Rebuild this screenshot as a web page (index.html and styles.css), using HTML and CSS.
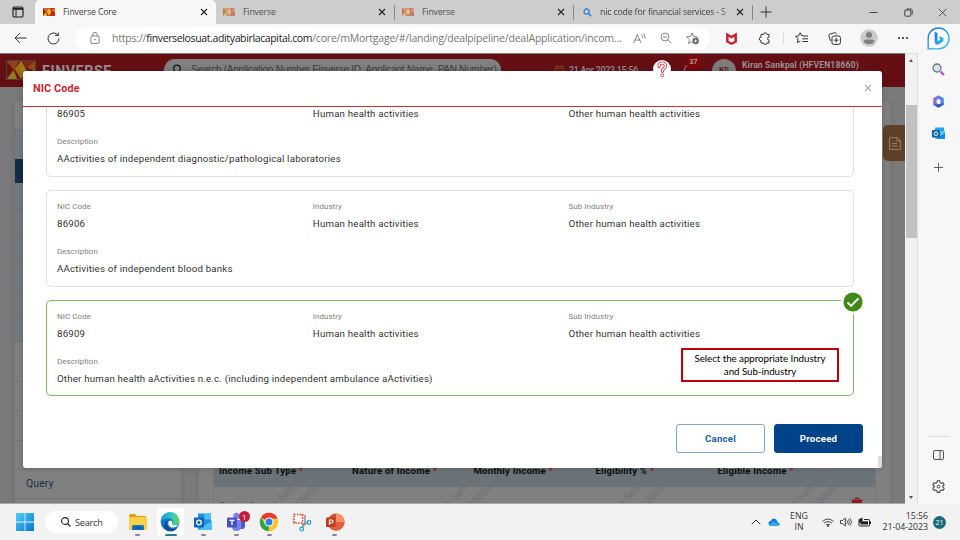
FILE: index.html
```html
<!DOCTYPE html>
<html lang="en">
<head>
<meta charset="utf-8">
<title>Finverse Core</title>
<link rel="stylesheet" href="styles.css">
</head>
<body>
<svg width="0" height="0" class="defs">
  <defs>
    <symbol id="logo" viewBox="0 0 30 20" preserveAspectRatio="none"><rect width="30" height="20" fill="#a61c12"/><path d="M0 0h13L7 10z" fill="#e0662a"/><path d="M13 0h17l-8 10z" fill="#c63a1c"/><path d="M8 9l7-9 6 11-6 9z" fill="#f2a51f"/><path d="M15 0l6 11h-7z" fill="#e7c43a"/><path d="M22 8l8 12H16z" fill="#cf2819"/><path d="M0 20l7-10 4 10z" fill="#e4bd2a"/><path d="M22 7l8-7v12z" fill="#e07a21"/></symbol>
    <symbol id="x" viewBox="0 0 8 8"><path d="M1 1l6 6M7 1L1 7" fill="none" stroke="currentColor" stroke-width="1.1"/></symbol>
  </defs>
</svg>

<header class="tabs">
  <svg class="tabmenu" viewBox="0 0 12 12"><rect x="1" y="1" width="10" height="10" rx="1.6" fill="none" stroke="#222" stroke-width="1.2"/><path d="M1 2.8h10" stroke="#222" stroke-width="2"/><path d="M4 3v8" stroke="#222"/></svg>
  <div class="tab active"><svg class="fav"><use href="#logo"/></svg><span>Finverse Core</span><svg class="close"><use href="#x"/></svg></div>
  <div class="tab dim"><svg class="fav"><use href="#logo"/></svg><span>Finverse</span><svg class="close"><use href="#x"/></svg></div>
  <div class="tab dim"><svg class="fav"><use href="#logo"/></svg><span>Finverse</span><svg class="close"><use href="#x"/></svg></div>
  <div class="tab nic"><svg class="mag" viewBox="0 0 9 9"><circle cx="3.6" cy="3.6" r="2.6" fill="none" stroke="#2583d8" stroke-width="1.3"/><path d="M5.5 5.5l2.7 2.7" stroke="#2583d8" stroke-width="1.5"/></svg><span>nic code for financial services - S</span><svg class="close"><use href="#x"/></svg></div>
  <svg class="newtab" viewBox="0 0 12 12"><path d="M6 .5v11M.5 6h11" stroke="#333" fill="none"/></svg>
  <div class="winctl">
    <svg viewBox="0 0 9 9"><path d="M.5 4.5h8" stroke="#333" stroke-width=".9"/></svg>
    <svg viewBox="0 0 9 9"><rect x=".8" y="2" width="6" height="6.2" rx="1" fill="none" stroke="#333" stroke-width=".9"/><path d="M2.5 1h4.2q1.5 0 1.5 1.5v4" fill="none" stroke="#333" stroke-width=".9"/></svg>
    <svg viewBox="0 0 9 9"><path d="M.8.8l7.6 7.6M8.4.8L.8 8.4" stroke="#333" stroke-width=".8"/></svg>
  </div>
</header>

<div class="browser">
  <div class="left">
    <div class="toolbar">
      <svg class="back" viewBox="0 0 13 12"><path d="M12.5 6H1M6 1L1 6l5 5" fill="none" stroke="#333"/></svg>
      <svg class="reload" viewBox="0 0 13 13"><path d="M12 6.5A5.5 5.5 0 1 1 9.8 2.1L11 3.2M11.3.5v3H8.2" fill="none" stroke="#333"/></svg>
      <div class="url">
        <svg class="lock" viewBox="0 0 10 12"><rect x=".8" y="4" width="8.4" height="7.4" rx="1.2" fill="none" stroke="#777" stroke-width=".9"/><path d="M2.8 4V2.6a2.2 2.2 0 0 1 4.4 0V4" fill="none" stroke="#777" stroke-width=".9"/><circle cx="5" cy="7.6" r=".8" fill="#777"/></svg>
        <span class="addr">https://<b>finverselosuat.adityabirlacapital.com</b>/core/mMortgage/#/landing/dealpipeline/dealApplication/incom...</span>
        <svg class="read" viewBox="0 0 13 11"><path d="M.6 10L4.300 1.500 8 10M2 7h4.700M8.300 1.500q1.600 1.500 1.200 3.500M10.500.6q2 2.200 1.500 5" fill="none" stroke="#777" stroke-width=".9"/></svg>
        <svg class="zo" viewBox="0 0 12 12"><circle cx="5" cy="5" r="3.9" fill="none" stroke="#777" stroke-width=".9"/><path d="M3 5h4M7.8 7.8l3.4 3.4" stroke="#777" stroke-width=".9"/></svg>
        <svg class="fv" viewBox="0 0 14 13"><path d="M6 1l1.5 3.5 4 .4-2.6 2.6M6 1L4.5 4.5l-4 .4 3 2.8-.9 3.9L5.8 9.7" fill="none" stroke="#777" stroke-width=".9"/><circle cx="9.6" cy="9" r="3.3" fill="#666"/><path d="M9.6 7.3v3.4M7.9 9h3.4" stroke="#fff" stroke-width=".8"/></svg>
      </div>
      <svg class="mc" viewBox="0 0 10 12"><path d="M0 .5l5 3 5-3v9L5 12 0 9.500zM2.300 4.300v3.900L5 9.600l2.700-1.400V4.300L5 6z" fill="#c8202f" fill-rule="evenodd"/></svg>
      <svg class="pz" viewBox="0 0 13 13"><path d="M3 2.4h2.6a1.6 1.6 0 0 1 3.2 0H11v2.7a1.5 1.5 0 0 0 0 3V11H8.7a1.5 1.5 0 0 1-3 0H3V8.6a1.7 1.7 0 0 1 0-3.4z" fill="none" stroke="#333" stroke-width="1" stroke-linejoin="round"/></svg>
      <i class="sep"></i>
      <svg class="favs" viewBox="0 0 14 12"><path d="M8 3.7L6.6 3.5 5.2.7 3.7 3.8l-3.2.5L3 6.8l-.6 3.8 2.9-1.6M8 4h5M7.3 6.8H13M7.3 9.5H13" fill="none" stroke="#333" stroke-linejoin="round"/></svg>
      <svg class="coll" viewBox="0 0 13 13"><rect x="4" y="4" width="8.4" height="8.4" rx="1.7" fill="none" stroke="#333"/><path d="M8.2 6v4.4M6 8.2h4.4M2.6 9L.8 3.7Q.5 2.6 1.6 2.2L6.600.7q1.100-.3 1.500.8l.3.9" fill="none" stroke="#333"/></svg>
      <svg class="ava" viewBox="0 0 18 18"><circle cx="9" cy="9" r="8.7" fill="#cdcac8"/><circle cx="9" cy="6" r="3" fill="#82807e"/><path d="M3.800 13q0-2.600 2.600-2.600h5.200q2.600 0 2.600 2.600-2 2.300-5.200 2.300T3.800 13" fill="#82807e"/></svg>
      <svg class="dots" viewBox="0 0 12 4"><circle cx="2" cy="2" r="1" fill="#222"/><circle cx="6" cy="2" r="1" fill="#222"/><circle cx="10" cy="2" r="1" fill="#222"/></svg>
    </div>

    <div class="view">
      <div class="page">
        <div class="apphead">
          <svg class="applogo"><use href="#logo"/></svg>
          <span class="brand">FINVERSE</span>
          <div class="appsearch"><svg viewBox="0 0 10 10"><circle cx="4.500" cy="4" r="3" fill="none" stroke="#111" stroke-width="1.100"/><path d="M6.500 6.500l3 3" stroke="#111"/></svg><span>Search (Application Number Finverse ID, Applicant Name, PAN Number)</span></div>
          <svg class="cal" viewBox="0 0 9 9"><path d="M.8 1.500h7.400v7H.8zM.8 3.500h7.400M2.500 0v2M6.500 0v2" fill="none" stroke="#84421f"/></svg>
          <span class="date">21 Apr 2023 15:56</span>
          <div class="bell"><svg viewBox="0 0 12 12"><path d="M2.500 12V6a3.800 3.800 0 0 1 4-3.500" fill="none" stroke="#9a8080"/></svg><span>37</span></div>
          <span class="ks">KS</span>
          <span class="user">Kiran Sankpal (HFVEN18660)</span>
        </div>
        <div class="content">
          <nav class="side">
            <div class="r r1"></div><div class="r r2"></div><div class="r on"></div><div class="r b1"></div><div class="r b1"></div><div class="r b1"></div><div class="r b2"></div><div class="r b1"></div><div class="r b1"></div><div class="r g1"></div><div class="r g2"></div><div class="r g2"></div><div class="r g2"></div><div class="r q">Query</div><div class="r last"></div>
          </nav>
          <section class="panel">
            <div class="grid">
              <div class="th"><span>Income Sub Type <em>*</em></span><span>Nature of Income <em>*</em></span><span>Monthly Income <em>*</em></span><span>Eligibility % <em>*</em></span><span>Eligible Income <em>*</em></span></div>
              <div class="td"><span>Rental - Own</span><svg viewBox="0 0 12 9"><path d="M.5 2.500h11L10 9H2zM3.500 2l1-1.500h3l1 1.500" fill="#8b191b"/><path d="M3.500 4v5M6 4v5M8.500 4v5" stroke="#773e3e" stroke-width=".6"/></svg></div>
            </div>
            <div class="wm"><span>Kiran Sankpal<br>HFVEN18660</span><span>Kiran Sankpal<br>HFVEN18660</span><span>Kiran Sankpal<br>HFVEN18660</span><span>Kiran Sankpal<br>HFVEN18660</span></div>
          </section>
        </div>
        <div class="note"><svg viewBox="0 0 12 13"><path d="M.6.6h7.600l3.200 3.200v8.600H.6zM8 .6v3.400h3.400M3 6.500h5M3 9h6" fill="none" stroke="#9a8773" stroke-width=".9"/></svg></div>

        <div class="modal">
          <div class="mhead"><h1>NIC Code</h1><svg><use href="#x"/></svg></div>
          <div class="mbody">
            <div class="cards">
              <article class="card">
                <dl><dt>NIC Code</dt><dd>86905</dd></dl><dl><dt>Industry</dt><dd>Human health activities</dd></dl><dl><dt>Sub Industry</dt><dd>Other human health activities</dd></dl>
                <dl class="full"><dt>Description</dt><dd>AActivities of independent diagnostic/pathological laboratories</dd></dl>
              </article>
              <article class="card">
                <dl><dt>NIC Code</dt><dd>86906</dd></dl><dl><dt>Industry</dt><dd>Human health activities</dd></dl><dl><dt>Sub Industry</dt><dd>Other human health activities</dd></dl>
                <dl class="full"><dt>Description</dt><dd>AActivities of independent blood banks</dd></dl>
              </article>
              <article class="card sel">
                <dl><dt>NIC Code</dt><dd>86909</dd></dl><dl><dt>Industry</dt><dd>Human health activities</dd></dl><dl><dt>Sub Industry</dt><dd>Other human health activities</dd></dl>
                <dl class="full"><dt>Description</dt><dd>Other human health aActivities n.e.c. (including independent ambulance aActivities)</dd></dl>
                <svg class="tick" viewBox="0 0 24 24"><circle cx="12" cy="12" r="12" fill="#fff"/><circle cx="12" cy="12" r="9.600" fill="#3f8a17"/><path d="M6.500 12.300l3.500 3.500 7.500-7.500" fill="none" stroke="#fff" stroke-width="1.900"/></svg>
                <div class="callout">Select the appropriate Industry<br>and Sub-industry</div>
              </article>
            </div>
          </div>
          <div class="mfoot"><button class="cancel">Cancel</button><button class="go">Proceed</button></div>
          <i class="mscroll"></i>
        </div>
        <div class="help"><svg viewBox="0 0 18 18"><path d="M6 6.500Q6 3 9.200 3t3.200 3q0 1.800-1.800 2.900-1.200.8-1.200 2.300" fill="none" stroke="#d3313a" stroke-width="3.200" stroke-linecap="round"/><path d="M6 6.500Q6 3 9.200 3t3.200 3q0 1.800-1.800 2.900-1.200.8-1.200 2.300" fill="none" stroke="#fff" stroke-width="1.400" stroke-linecap="round"/><circle cx="9.300" cy="15.300" r="1.400" fill="#fff" stroke="#d3313a" stroke-width=".9"/></svg></div>
      </div>
      <div class="scroll"><i class="up"></i><i class="thumb"></i><i class="down"></i></div>
    </div>
  </div>

  <aside class="edgebar">
    <svg class="bing" viewBox="0 0 24 24"><defs><linearGradient id="bg" x1="0" y1="0" x2="1" y2="1"><stop offset="0" stop-color="#1c6fe0"/><stop offset="1" stop-color="#35c8e8"/></linearGradient></defs><path d="M1.200 22.800V12A10.900 10.900 0 1 1 12 22.800z" fill="#fff" stroke="url(#bg)" stroke-width="1.400"/><path d="M8 5l3 1.200v8.600l2.800-1.700-1.400-3.400 4.800 1.900v3.200L11 18.700l-3-1.800z" fill="url(#bg)"/></svg>
    <svg class="srch" viewBox="0 0 13 13"><circle cx="5" cy="5" r="4" fill="#cfe3f2" stroke="#777" stroke-width="1.300"/><path d="M8.500 8.500L12 12" stroke="#b443e6" stroke-width="2.200"/></svg>
    <svg class="m365" viewBox="0 0 13 13"><path d="M6.500.2L1.200 3.200v6.500l5.300 3.100 2-3.300-3.300-1V4.400z" fill="#8f6bd9"/><path d="M4 9.500l4-.4 3.800-2v2.600l-5.300 3.100L1.500 9.700z" fill="#355ac5"/><path d="M6.500.2l5.300 3v4L8.200 9.500V4.400L5 4z" fill="#5687e0"/><circle cx="6.500" cy="6.500" r="2" fill="#f7f7f7"/></svg>
    <svg class="ol" viewBox="0 0 13 13"><path d="M3 .5h9v11H3z" fill="#2aa3e8"/><path d="M7 4h6v8H4V7z" fill="#54c4f2"/><path d="M4 12l9-6v6z" fill="#168bd8"/><rect y="3" width="8" height="7.500" rx=".7" fill="#0a64b8"/><circle cx="4" cy="6.700" r="1.800" fill="none" stroke="#fff"/></svg>
    <svg class="plus" viewBox="0 0 9 9"><path d="M4.500 0v9M0 4.500h9" stroke="#555" stroke-width=".9"/></svg>
    <i class="rule"></i>
    <svg class="pane" viewBox="0 0 11 10"><rect x=".5" y=".5" width="10" height="9" rx="1.500" fill="none" stroke="#555"/><path d="M7 .5v9" stroke="#555"/></svg>
    <svg class="gear" viewBox="0 0 24 24"><path d="M9.700 1.500h4.600l.7 3.300 2 1.100 3.200-1 2.300 4-2.500 2.200v2.200l2.500 2.200-2.300 4-3.200-1-2 1.100-.7 3.300H9.700L9 19.600l-2-1.100-3.200 1-2.300-4L4 13.300v-2.200L1.500 8.900l2.300-4 3.200 1 2-1.100z" fill="none" stroke="#444" stroke-width="2" stroke-linejoin="round"/><circle cx="12" cy="12.200" r="2.600" fill="none" stroke="#444" stroke-width="1.800"/></svg>
  </aside>
</div>

<footer class="taskbar">
  <svg class="start" viewBox="0 0 18 18"><defs><linearGradient id="w" x1="0" y1="0" x2="1" y2="1"><stop offset="0" stop-color="#4fd0f6"/><stop offset="1" stop-color="#0a73d0"/></linearGradient></defs><path d="M0 0h8.600v8.600H0zM9.400 0H18v8.600H9.400zM0 9.400h8.600V18H0zM9.400 9.400H18V18H9.400z" fill="url(#w)"/></svg>
  <div class="tsearch"><svg viewBox="0 0 10 10"><circle cx="4" cy="4" r="3.400" fill="none" stroke="#222" stroke-width="1.100"/><path d="M6.500 6.500l3 3" stroke="#222" stroke-width="1.100"/></svg><span>Search</span></div>
  <div class="app"><svg viewBox="0 0 20 20"><path d="M1 4q0-2 1.500-2H7l2 2h9v13H1z" fill="#e2a010"/><rect x="1" y="5" width="18" height="13" rx="1" fill="#fdd04b"/><path d="M4 18v-3.500q0-1.500 1.500-1.500h9q1.500 0 1.500 1.500V18z" fill="#1670bd"/><path d="M7 16h6" stroke="#0a4f91" stroke-width="1.200"/></svg></div>
  <div class="app cur"><svg viewBox="0 0 20 20"><defs><linearGradient id="e1" x1="0" y1="0" x2="1" y2="0"><stop offset="0" stop-color="#1d9fdb"/><stop offset=".6" stop-color="#35c6c4"/><stop offset="1" stop-color="#66d64b"/></linearGradient></defs><circle cx="10" cy="10" r="9.300" fill="#1377c8"/><path d="M.7 9.500A9.300 9.300 0 0 1 19.300 9q.2 4.200-4.300 4.200-3 0-3-1.500 1-1 .7-2.500Q12 6.400 8.500 6.300 3.500 6.300.7 9.500" fill="url(#e1)"/><path d="M8 8.500q-2.500 5 2.200 7.700 3.800 2 7.400-.8-2.600 4-7.400 3.900-4.500-.4-6-4.300Q3.300 10.500 8 8.500" fill="#114a95"/><path d="M8.500 9.500q3-1.500 3.800.2-.8 1.300-.3 2.500 1.800 2 6.700.2-3.200 4-7.200 3-4.200-1.600-3-5.900" fill="#fff"/></svg></div>
  <div class="app"><svg viewBox="0 0 20 20"><path d="M5 1.500h13v13H5z" fill="#1f8fe0"/><path d="M11.500 1.500H18v6h-6.500z" fill="#4cc3f4"/><path d="M5 9l7 4 7-4v9H5z" fill="#2e9ee8"/><path d="M19 9v9H5z" fill="#4cc0f2"/><rect x="1" y="5.500" width="10" height="10" rx="1" fill="#0e62b5"/><circle cx="6" cy="10.500" r="2.300" fill="none" stroke="#fff" stroke-width="1.300"/></svg></div>
  <div class="app"><svg viewBox="0 0 20 20"><circle cx="16" cy="6" r="2.400" fill="#5b62c9"/><circle cx="10.500" cy="4" r="3.200" fill="#7b83eb"/><path d="M13 8h6v6q0 3-3 3h-3z" fill="#5059c9"/><path d="M6 8h9v6.500q0 4.500-4.500 4.500T6 14.500z" fill="#7b83eb"/><rect x="1" y="5.500" width="10" height="10" rx="1" fill="#4b53bc"/><path d="M3.500 8.300h5M6 8.300V13" stroke="#fff" stroke-width="1.300"/></svg><span class="badge">1</span></div>
  <div class="app"><svg viewBox="0 0 20 20"><circle cx="10" cy="10" r="9.200" fill="#f8c52c"/><path d="M10 10L2 5.400A9.200 9.200 0 0 1 18 5.400l.5 1H10z" fill="#e33b2e"/><path d="M2 5.400l4.500 7.400L10 14l-.5 5.200A9.200 9.200 0 0 1 2 5.400" fill="#2da14b"/><circle cx="10" cy="10" r="4.600" fill="#fff"/><circle cx="10" cy="10" r="3.500" fill="#2b7de9"/></svg></div>
  <div class="app snip"><svg viewBox="0 0 20 20"><rect x="2" y="2.500" width="8.500" height="8.500" fill="#fff" stroke="#d9492d" stroke-width="1.700" stroke-dasharray="1.700 1.130"/><path d="M13 3v9L9.500 16M10 12.500l6-1.500" stroke="#8a8f96" stroke-width="1.500" fill="none"/><circle cx="17" cy="10.500" r="1.800" fill="#fff" stroke="#1d9ad6" stroke-width="1.200"/><circle cx="9.700" cy="17.200" r="1.800" fill="#fff" stroke="#1d9ad6" stroke-width="1.200"/></svg></div>
  <div class="app"><svg viewBox="0 0 20 20"><circle cx="11" cy="10" r="8.500" fill="#d35230"/><path d="M11 1.500A8.500 8.500 0 0 1 19.500 10H11z" fill="#ff8f6b"/><path d="M3 13a8.500 8.500 0 0 0 16.500-3H11z" fill="#e0603e"/><rect x="1" y="5.500" width="9.500" height="9.500" rx="1" fill="#c2391b"/><path d="M4.500 13V8h2q1.500 0 1.500 1.500T6.500 11h-2" fill="none" stroke="#fff" stroke-width="1.200"/></svg></div>
  <div class="tray">
    <svg class="chev" viewBox="0 0 10 6"><path d="M.7 5.300L5 1l4.300 4.300" fill="none" stroke="#333"/></svg>
    <svg class="cloud" viewBox="0 0 13 8"><path d="M3 8a2.500 2.500 0 0 1 0-5Q4 .2 6.700.3T10 3.200 12.800 5.700 10.500 8z" fill="#0f7fd8"/><path d="M1 7l5-3.500 6.300 3.600L10.500 8H3z" fill="#31a9ee"/></svg>
    <span class="lang">ENG<br>IN</span>
    <svg class="wifi" viewBox="0 0 12 9"><path d="M.5 3.500Q6-1.500 11.500 3.500M2.200 5.200Q6 2 9.800 5.200M4 7Q6 5.300 8 7" fill="none" stroke="#333" stroke-width=".9"/><circle cx="6" cy="8" r=".9" fill="#333"/></svg>
    <svg class="vol" viewBox="0 0 12 10"><path d="M.5 3.500h2L5.300 1v8L2.500 6.500h-2z" fill="none" stroke="#333" stroke-width=".9"/><path d="M6.800 3.200q1.500 1.800 0 3.600M8.200 2q2.500 3 0 6M9.700 1q3.200 4 0 8" fill="none" stroke="#333" stroke-width=".8"/></svg>
    <svg class="bat" viewBox="0 0 13 10"><path d="M1 3.500V8q0 1 1 1h8.500q1 0 1-1V3.500q0-1-1-1H6M12.500 4.500v2.500" fill="none" stroke="#222"/><path d="M2.500 4.300h7.500v3.200H2.500z" fill="#222"/><path d="M.5 2.500L4.500.5v4l-3 1.500z" fill="#222"/></svg>
    <span class="clock">15:56<br>21-04-2023</span>
    <span class="n21">21</span>
  </div>
</footer>
</body>
</html>
```
FILE: styles.css
```css
* { box-sizing: border-box; }
body { margin: 0; width: 960px; height: 540px; overflow: hidden; display: flex; flex-direction: column; font-family: "Open Sans", sans-serif; background: #f2f2f2; }
svg { display: block; flex: none; }
.defs { position: absolute; }
i { display: block; }

/* tab strip */
.tabs { height: 24px; flex: none; display: flex; align-items: center; background: #cdcdcd; color: #555; font-size: 8.8px; letter-spacing: -.18px; }
.tabmenu { width: 12px; height: 12px; margin: 0 11px 0 12px; }
.tab { width: 179px; height: 24px; display: flex; align-items: center; padding: 0 8px 0 7px; position: relative; }
.tab.active { width: 181px; background: #f7f7f7; border-radius: 5px 5px 0 0; color: #444; padding-left: 8px; }
.tab span { flex: 1; white-space: nowrap; margin-left: 8px; }
.tab.dim, .tab.nic { height: 15px; border-right: 1px solid #888; }
.tab.nic { width: 179px; padding-left: 9px; color: #444; letter-spacing: -.18px; }
.tab.nic span { -webkit-mask-image: linear-gradient(90deg, #000 88%, transparent 98%); }
.tab.dim .fav { opacity: .5; }
.fav { width: 12px; height: 8px; }
.close { width: 8px; height: 8px; color: #222; }
.mag { width: 9px; height: 9px; }
.newtab { width: 12px; height: 12px; margin-left: 7px; }
.winctl { margin-left: auto; display: flex; gap: 25.500px; padding-right: 13px; }
.winctl svg { width: 9px; height: 9px; }

.browser { flex: 1; min-height: 0; display: flex; }
.left { width: 918px; display: flex; flex-direction: column; }
.toolbar { height: 29px; flex: none; background: #f7f7f7; display: flex; align-items: center; padding-bottom: 1px; }
.back { width: 13px; height: 12px; margin-left: 14px; }
.reload { width: 13px; height: 13px; margin-left: 20px; }
.url { width: 635px; height: 23px; margin-left: 15px; background: #fff; border-radius: 12px; display: flex; align-items: center; padding-left: 15px; color: #767676; }
.lock { width: 10px; height: 12px; }
.addr { width: 516px; margin-left: 12px; font-size: 10.500px; white-space: nowrap; letter-spacing: -.2px; }
.addr b { font-weight: 400; color: #222; letter-spacing: -.36px; }
.read { width: 13px; height: 11px; margin-left: 5px; }
.zo { width: 12px; height: 12px; margin-left: 14px; }
.fv { width: 14px; height: 13px; margin-left: 14px; }
.mc { width: 11px; height: 13px; margin-left: 16px; }
.pz { width: 13px; height: 13px; margin-left: 21px; }
.sep { width: 1px; height: 12px; background: #ddd; margin-left: 12px; }
.favs { width: 14px; height: 12px; margin-left: 11px; }
.coll { width: 13px; height: 13px; margin-left: 19px; }
.ava { width: 18px; height: 18px; margin-left: 19px; }
.dots { width: 12px; height: 4px; margin-left: 19px; }

.view { flex: 1; min-height: 0; display: flex; }
.page { width: 905px; position: relative; overflow: hidden; background: #7a7a7a; font-family: "Roboto", sans-serif; border-top: 1px solid #847a7a; border-bottom: 1px solid #aaa; }
.apphead { height: 33px; background: #650f15; display: flex; padding-top: 5px; color: #9a9090; }
.applogo { width: 30px; height: 20px; margin: 1px 0 0 6px; border: 1px solid #806060; filter: brightness(.65); }
.brand { width: 72px; margin-left: 6px; font-size: 14.200px; font-weight: 700; line-height: 24px; letter-spacing: .6px; }
.appsearch { width: 337px; height: 22px; margin-left: 50px; border-radius: 11px; background: #808080; display: flex; padding-left: 7px; color: #3e3e3e; font: 10px/21px "Liberation Sans", sans-serif; white-space: nowrap; }
.appsearch svg { width: 11px; height: 11px; margin: 5px 8px 0 1px; }
.appsearch span { letter-spacing: -.24px; }
.cal { width: 9px; height: 9px; margin: 6px 0 0 54px; }
.date { width: 72px; margin-left: 5px; font-size: 8.800px; font-weight: 500; line-height: 22px; white-space: nowrap; letter-spacing: -.22px; }
.bell { display: flex; margin-left: 41px; }
.bell svg { width: 12px; height: 12px; margin-top: 4px; }
.bell span { width: 15px; height: 15px; margin: -4px 0 0 -8px; border-radius: 50%; background: #80060a; color: #b5a0a0; font: 700 6.800px/15px Roboto, sans-serif; text-align: center; position: relative; }
.ks { width: 24px; height: 24px; border-radius: 50%; background: #807c7c; color: #65161b; font-size: 8px; font-weight: 700; line-height: 22px; text-align: center; margin-left: 11px; }
.user { margin: -1px 0 0 6px; font-size: 8.600px; font-weight: 700; line-height: 14px; white-space: nowrap; letter-spacing: .13px; }
.content { height: 418px; display: flex; background: #7b7b7b; }
.side { width: 166px; margin: 14px 18px 0 15px; background: #808080; box-shadow: 0 0 7px #696969; border-radius: 3px 3px 0 0; }
.r { height: 29px; border-bottom: 1px solid #747474; }
.r2 { background: #727a7f; }
.on { height: 25px; background: #112e47; }
.b1 { height: 25.400px; background: #727a7f; }
.b2 { height: 31px; background: #727a7f; }
.g1 { height: 40px; }
.g2 { height: 29.400px; }
.q { height: 29px; padding-left: 11px; color: #1b3149; font-size: 10.400px; line-height: 28px; letter-spacing: .15px; }
.last { height: 5px; border: 0; }
.panel { width: 691px; margin-top: 14px; background: #808080; padding: 367px 14px 0; border-radius: 6px 6px 0 0; position: relative; box-shadow: 0 0 8px #707070; }
.grid { border: 1px solid #777; border-top: 0; }
.th { height: 19px; background: #6a7378; display: grid; grid-template-columns: 133px 121.500px 122px 122px 1fr; padding-left: 5px; color: #0d0d0d; font-size: 9.600px; font-weight: 700; line-height: 5px; letter-spacing: .2px; white-space: nowrap; }
.th em { color: #912020; font-style: normal; }
.td { height: 17px; display: flex; justify-content: space-between; padding: 11px 12px 0 6px; font-size: 8px; line-height: 14px; color: #444; }
.td svg { width: 12px; height: 9px; margin-top: -1px; }
.wm { position: absolute; left: 58px; top: 384px; display: flex; gap: 111px; }
.wm span { width: 62px; font-size: 10px; line-height: 17px; color: #6e7277; transform: rotate(-45deg); white-space: nowrap; text-align: right; }
.note { position: absolute; left: 883px; top: 71px; width: 30px; height: 36px; border-radius: 5px; background: #5f4028; padding: 12px 6px; }
.note svg { width: 12px; height: 13px; }

/* dialog */
.modal { position: absolute; left: 23px; top: 17px; width: 859px; height: 397px; background: #fff; border-radius: 3px; box-shadow: 0 0 7px rgba(0,0,0,.18); display: flex; flex-direction: column; overflow: hidden; }
.mhead { height: 36px; flex: none; border-bottom: 1px solid #cf2e38; display: flex; justify-content: space-between; align-items: center; padding: 0 10px; }
.mhead h1 { margin: 0; color: #cf2530; font-size: 10.800px; font-weight: 700; letter-spacing: .15px; }
.mhead svg { width: 8px; height: 8px; color: #aaa; position: relative; top: -1px; }
.mbody { height: 302px; overflow: hidden; padding: 0 28px 0 23px; }
.cards { margin-top: -27px; display: flex; flex-direction: column; gap: 13.500px; }
.card { height: 96.500px; border: 1px solid #dfdfdf; border-radius: 5px; padding: 11px 0 0 10px; display: grid; grid-template-columns: 255.800px 255.800px 1fr; grid-auto-rows: 45.300px; position: relative; }
.card.sel { height: 96px; border-color: #81b368; }
dl { margin: 0; }
.full { grid-column: 1 / -1; }
dt { font-size: 8px; line-height: 10px; color: #808080; letter-spacing: .03px; }
dd { margin: 5px 0 0; font-size: 9.700px; line-height: 14px; color: #333; letter-spacing: .2px; white-space: nowrap; }
.tick { position: absolute; right: -12px; top: -11px; width: 24px; height: 24px; }
.callout { position: absolute; left: 634px; top: 47px; width: 158px; height: 34px; border: 2px solid #c00000; background: #fff; color: #000; font: 9.800px/13px Lato, sans-serif; letter-spacing: -.06px; text-align: center; padding-top: 2px; white-space: nowrap; }
.mfoot { display: flex; justify-content: flex-end; gap: 9px; padding: 15px 19px 0 0; }
.mfoot button { width: 89px; height: 29px; border: 1px solid #82a5d0; border-radius: 3px; background: #fff; color: #205fa0; font: 700 9.600px Roboto, sans-serif; letter-spacing: .25px; padding: 0; }
.mfoot .go { background: #004389; border-color: #004389; color: #fff; }
.mscroll { position: absolute; right: 0; bottom: 0; width: 4px; height: 12px; background: #ddd; }
.help { position: absolute; left: 653px; top: 6px; width: 18px; height: 18px; border-radius: 50%; background: #fff; }
.help svg { width: 18px; height: 18px; }

.scroll { width: 13px; background: #f1f1f1; border-right: 1px solid #ddd; border-top: 1px solid #ddd; display: flex; flex-direction: column; align-items: center; }
.up, .down { border: 2.500px solid transparent; }
.up { border-bottom: 3px solid #555; border-top: 0; margin-top: 5px; }
.down { border-top: 3px solid #555; border-bottom: 0; margin: auto 0 5px; }
.thumb { width: 11px; height: 133px; background: #c1c1c1; margin-top: 43px; }

.edgebar { width: 42px; background: #f7f7f7; display: flex; flex-direction: column; align-items: center; padding: 3px 1px 0 0; }
.bing { width: 23px; height: 23px; }
.srch { width: 13px; height: 13px; margin-top: 13px; }
.m365 { width: 13px; height: 13px; margin-top: 19px; }
.ol { width: 13px; height: 13px; margin-top: 19px; }
.plus { width: 9px; height: 9px; margin-top: 23px; }
.rule { width: 21px; height: 1px; background: #ddd; margin-top: auto; }
.pane { width: 11px; height: 10px; margin-top: 13px; }
.gear { width: 13px; height: 13px; margin: 20px 0 11px; }

.taskbar { height: 36px; flex: none; background: #f2f2f2; display: flex; align-items: center; }
.start { width: 18px; height: 18px; margin-left: 16px; }
.tsearch { width: 73px; height: 22px; margin: 0 6px 0 11px; background: #fff; border-radius: 11px; display: flex; align-items: center; padding-left: 16px; font-size: 9.200px; color: #333; letter-spacing: -.25px; }
.tsearch svg { width: 10px; height: 10px; margin-right: 4px; }
.app { width: 27px; height: 28px; margin-right: 5.900px; position: relative; display: flex; justify-content: center; align-items: center; border-radius: 3px; }
.app svg { width: 20px; height: 20px; }
.app.cur { background: #fff; }
.app::after { content: ""; position: absolute; left: 11px; bottom: 0; width: 5px; height: 2px; border-radius: 1px; background: #888; }
.app.cur::after { left: 8px; width: 12px; background: #1e7f91; }
.app.snip::after { display: none; }
.badge { position: absolute; right: 0; top: 3px; width: 11px; height: 11px; border-radius: 50%; background: #c51c3a; color: #fff; font-size: 8px; line-height: 11px; text-align: center; }
.tray { margin-left: auto; display: flex; align-items: center; color: #333; font-size: 8.800px; line-height: 11.500px; letter-spacing: -.03px; padding-right: 14px; }
.chev { width: 10px; height: 6px; margin-right: 7px; }
.cloud { width: 12px; height: 8px; }
.lang { width: 38px; text-align: center; }
.wifi { width: 12px; height: 9px; margin-left: 4px; }
.vol { width: 12px; height: 10px; margin-left: 6px; }
.bat { width: 13px; height: 10px; margin-left: 6px; }
.clock { width: 57px; text-align: right; }
.n21 { width: 13px; height: 13px; margin-left: 5px; border-radius: 50%; background: #1c6b78; color: #fff; font-size: 7px; line-height: 13px; text-align: center; }
```
